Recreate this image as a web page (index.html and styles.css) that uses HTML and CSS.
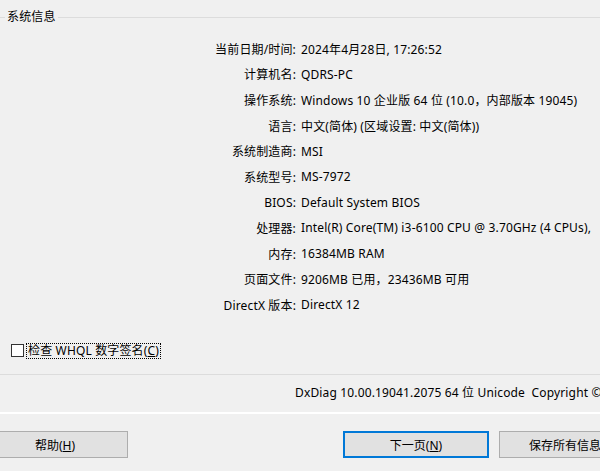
FILE: index.html
```html
<!DOCTYPE html>
<html lang="zh-CN">
<head>
    <meta charset="UTF-8">
    <meta name="viewport" content="width=device-width, initial-scale=1.0">
    <title>DirectX 诊断工具</title>
    <link rel="stylesheet" href="styles.css">
</head>
<body>
    <!-- System tab of the diagnostic dialog -->
    <div class="dialog">
        <fieldset class="group">
            <legend>系统信息</legend>
            <dl class="info">
                <dt>当前日期/时间:</dt><dd>2024年4月28日, 17:26:52</dd>
                <dt>计算机名:</dt><dd>QDRS-PC</dd>
                <dt>操作系统:</dt><dd>Windows 10 企业版 64 位 (10.0，内部版本 19045)</dd>
                <dt>语言:</dt><dd>中文(简体) (区域设置: 中文(简体))</dd>
                <dt>系统制造商:</dt><dd>MSI</dd>
                <dt>系统型号:</dt><dd>MS-7972</dd>
                <dt>BIOS:</dt><dd>Default System BIOS</dd>
                <dt>处理器:</dt><dd>Intel(R) Core(TM) i3-6100 CPU @ 3.70GHz (4 CPUs),</dd>
                <dt>内存:</dt><dd>16384MB RAM</dd>
                <dt>页面文件:</dt><dd>9206MB 已用，23436MB 可用</dd>
                <dt>DirectX 版本:</dt><dd>DirectX 12</dd>
            </dl>
            <label class="whql">
                <span class="box"></span>
                <span class="focus">检查 WHQL 数字签名(<u>C</u>)</span>
            </label>
        </fieldset>

        <div class="version">DxDiag 10.00.19041.2075 64 位 Unicode&nbsp; Copyright ©</div>

        <!-- Buttons along the bottom -->
        <div class="buttons">
            <button class="btn help">帮助(<u>H</u>)</button>
            <button class="btn next">下一页(<u>N</u>)</button>
            <button class="btn save">保存所有信息(<u>S</u>)</button>
        </div>
    </div>
</body>
</html>
```

FILE: styles.css
```css
/* Basic styling for the dialog */
html, body {
    margin: 0;
    height: 100%;
    overflow: hidden;
}
body {
    background-color: #f0f0f0;
    color: #000;
    font-family: "Noto Sans", "Noto Sans CJK SC", sans-serif;
    font-size: 12px;
    letter-spacing: 0.15px;
    white-space: nowrap;
}
.dialog {
    width: 600px;
    height: 471px;
    overflow: hidden;
}
.group {
    margin: 9px -10px 0 -10px;
    padding: 0;
    border: 1px solid #dcdcdc;
    height: 366px;
    box-sizing: border-box;
}
.group legend {
    margin-left: 14px;
    padding: 0 2px;
    line-height: 16px;
}
.info {
    display: grid;
    grid-template-columns: 295px auto;
    column-gap: 5px;
    grid-auto-rows: 25.6px;
    align-items: center;
    margin: 11px 0 0 10px;
}
.info dt {
    text-align: right;
}
.info dd {
    margin: 0;
}
.whql {
    display: flex;
    align-items: center;
    margin: 25px 0 0 20px;
    height: 16px;
}
.whql .box {
    width: 11px;
    height: 11px;
    border: 1px solid #333;
    background-color: #fff;
}
.whql .focus {
    margin-left: 2px;
    padding: 0 1px;
    line-height: 14px;
    border: 1px dotted #000;
}
.version {
    padding-left: 295px;
    line-height: 16px;
    margin-top: 10px;
}
.buttons {
    display: flex;
    margin-top: 11px;
    padding-top: 17px;
    border-top: 2px solid #fff;
}
.btn {
    flex-shrink: 0;
    width: 146px;
    height: 27px;
    font: inherit;
    color: #000;
    background-color: #e1e1e1;
    border: 1px solid #adadad;
    padding: 0;
}
.btn.help {
    margin-left: -18px;
}
.btn.next {
    margin-left: 215px;
    border: 2px solid #0078d7;
}
.btn.save {
    margin-left: 10px;
}
```
